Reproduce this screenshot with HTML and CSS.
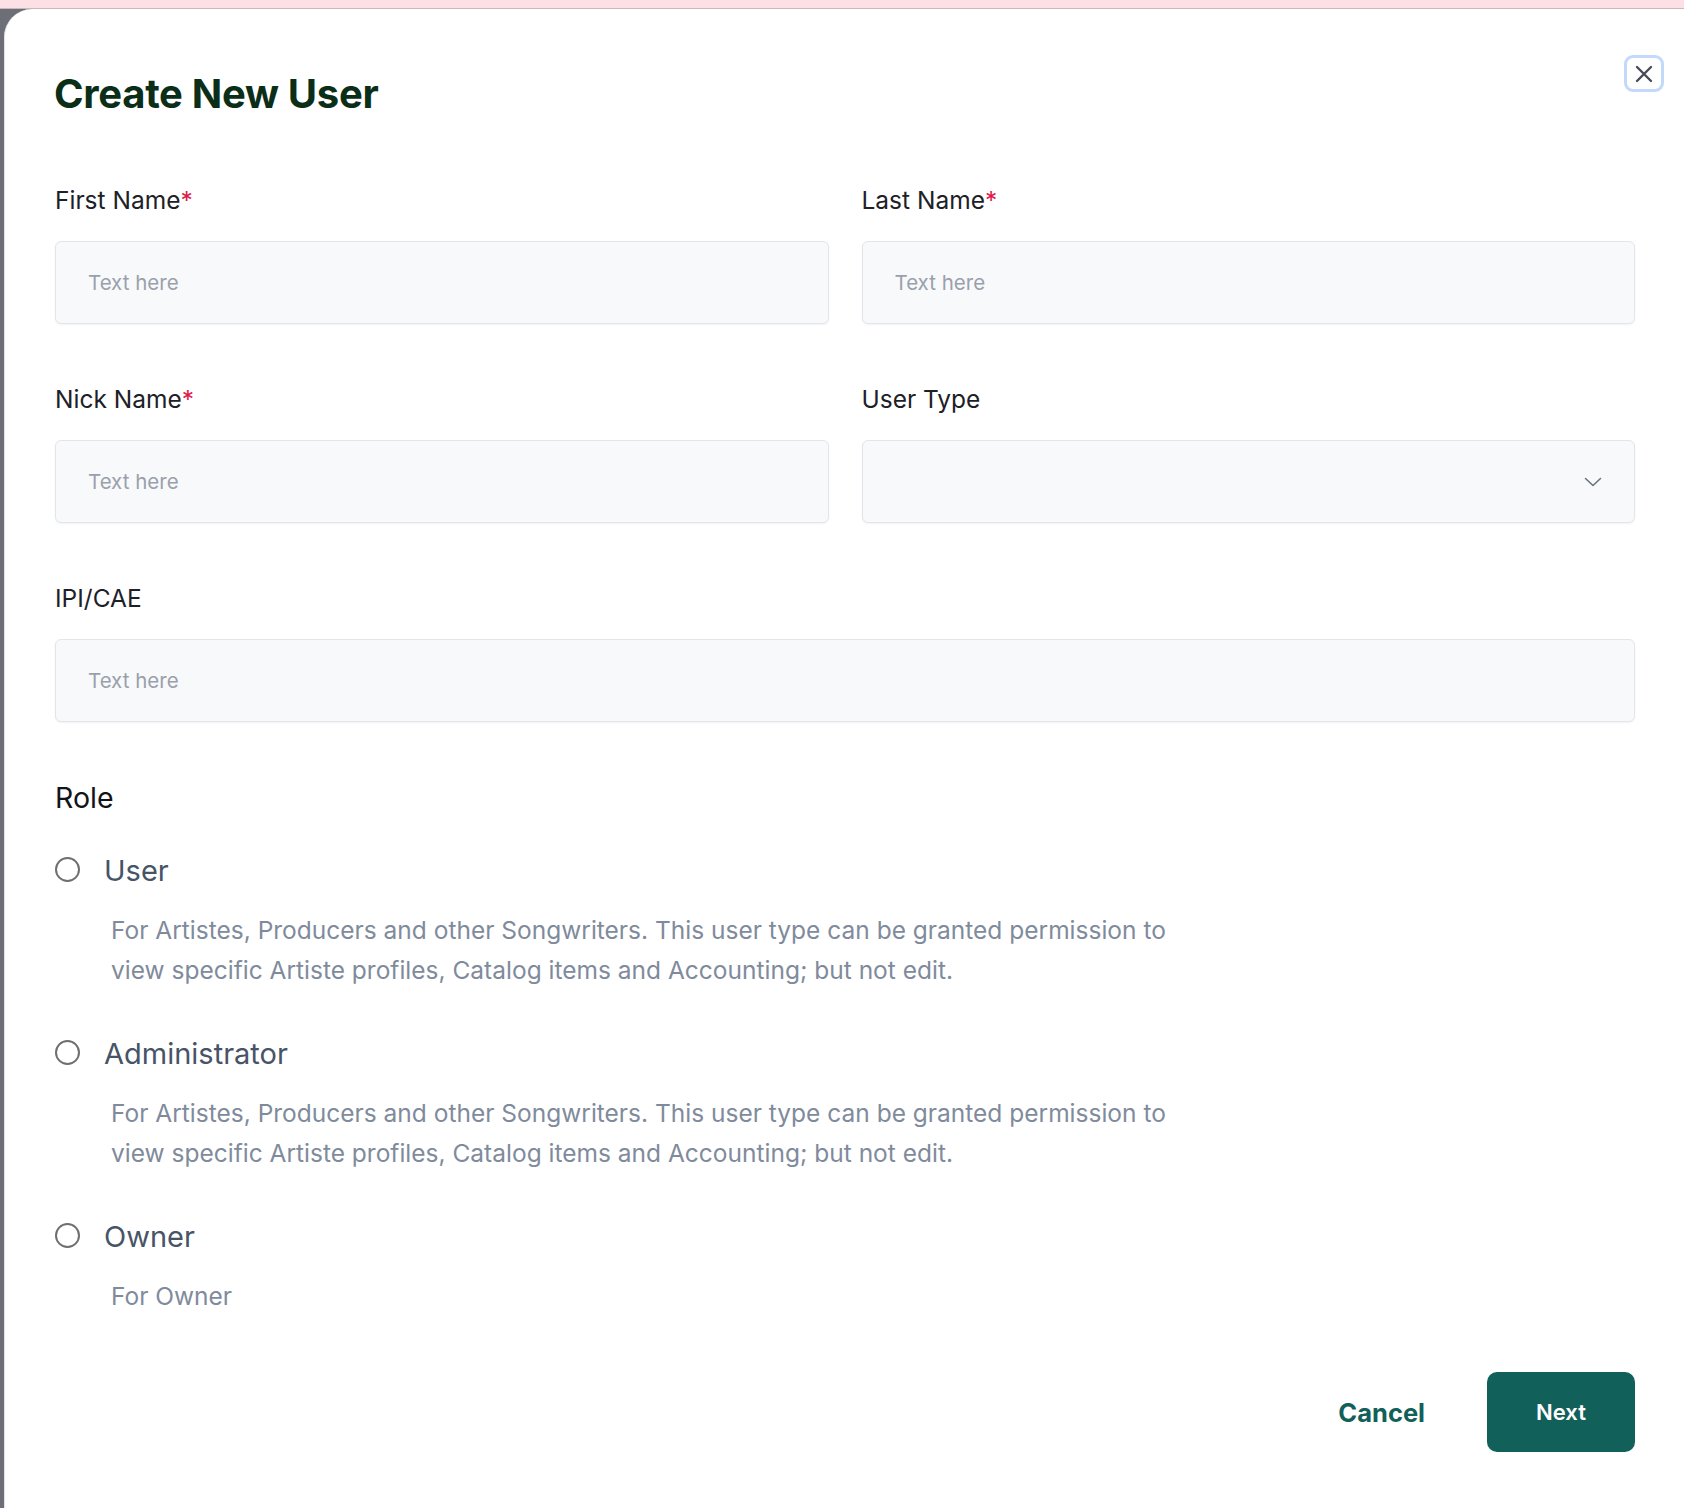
FILE: index.html
```html
<!DOCTYPE html>
<html lang="en">
<head>
<meta charset="utf-8">
<title>Create New User</title>
<link rel="stylesheet" href="styles.css">
</head>
<body>
<div class="topbar"></div>
<div class="modal">
  <button class="close" aria-label="Close">
    <svg width="20" height="20" viewBox="0 0 20 20"><path d="M3 3 L17 17 M17 3 L3 17" stroke="#474c58" stroke-width="2.4" stroke-linecap="round" fill="none"/></svg>
  </button>
  <h1 class="title">Create New User</h1>

  <div class="grid">
    <div class="field">
      <label class="label">First Name<span class="req">*</span></label>
      <div class="input"><span class="ph">Text here</span></div>
    </div>
    <div class="field">
      <label class="label">Last Name<span class="req">*</span></label>
      <div class="input"><span class="ph">Text here</span></div>
    </div>
    <div class="field">
      <label class="label">Nick Name<span class="req">*</span></label>
      <div class="input"><span class="ph">Text here</span></div>
    </div>
    <div class="field">
      <label class="label">User Type</label>
      <div class="input select">
        <svg width="18" height="10" viewBox="0 0 18 10"><path d="M1.5 1.5 L9 8.5 L16.5 1.5" stroke="#6b7280" stroke-width="1.6" fill="none" stroke-linecap="round" stroke-linejoin="round"/></svg>
      </div>
    </div>
    <div class="field wide">
      <label class="label">IPI/CAE</label>
      <div class="input"><span class="ph">Text here</span></div>
    </div>
  </div>

  <h2 class="role-title">Role</h2>
  <div class="roles">
    <div class="role">
      <div class="role-head"><span class="radio"></span><span class="role-name">User</span></div>
      <p class="role-desc">For Artistes, Producers and other Songwriters. This user type can be granted permission to<br>view specific Artiste profiles, Catalog items and Accounting; but not edit.</p>
    </div>
    <div class="role">
      <div class="role-head"><span class="radio"></span><span class="role-name">Administrator</span></div>
      <p class="role-desc">For Artistes, Producers and other Songwriters. This user type can be granted permission to<br>view specific Artiste profiles, Catalog items and Accounting; but not edit.</p>
    </div>
    <div class="role">
      <div class="role-head"><span class="radio"></span><span class="role-name">Owner</span></div>
      <p class="role-desc">For Owner</p>
    </div>
  </div>

  <div class="actions">
    <button class="btn-cancel">Cancel</button>
    <button class="btn-next">Next</button>
  </div>
</div>
</body>
</html>
```

FILE: styles.css
```css
* { box-sizing: border-box; }
html, body { margin: 0; padding: 0; }
body {
  background: #6c6f75;
  font-family: Inter, "Noto Sans", "Liberation Sans", sans-serif;
  height: 1508px;
  overflow: hidden;
}
.topbar {
  height: 9px;
  background: #fde0e5;
  border-bottom: 1px solid #c6b8bc;
}
.modal {
  position: relative;
  margin-left: 4px;
  width: 1680px;
  min-height: 1499px;
  background: #ffffff;
  border-top-left-radius: 28px;
  border-left: 1px solid #dde4ef;
  padding: 61px 49px 0 50px;
}
.close {
  position: absolute;
  top: 46px;
  right: 20px;
  width: 40px;
  height: 37px;
  border: 3px solid #c3d9fc;
  border-radius: 9px;
  background: #fff;
  display: flex;
  align-items: center;
  justify-content: center;
  padding: 0;
}
.title {
  margin: 0 0 0 -1px;
  font-size: 40px;
  line-height: 48px;
  font-weight: 700;
  color: #0a2e18;
  letter-spacing: -0.3px;
}
.grid {
  margin-top: 66px;
  display: grid;
  grid-template-columns: 1fr 1fr;
  column-gap: 33px;
  row-gap: 59px;
}
.wide { grid-column: 1 / span 2; }
.label {
  display: block;
  font-size: 24.5px;
  line-height: 32px;
  color: #1d2127;
  font-weight: 400;
}
.req { color: #e0194a; }
.input {
  margin-top: 25px;
  height: 83px;
  background: #f8f9fb;
  border: 1px solid #e2e5e9;
  border-radius: 6px;
  box-shadow: 0 1px 2px rgba(16, 24, 40, 0.05);
  display: flex;
  align-items: center;
  padding: 0 32px;
}
.ph {
  font-size: 20.5px;
  color: #9aa0ab;
}
.select { justify-content: flex-end; padding-right: 32px; }
.role-title {
  margin: 58px 0 0;
  font-size: 28.5px;
  line-height: 36px;
  font-weight: 400;
  color: #121417;
}
.roles { margin-top: 37px; display: flex; flex-direction: column; gap: 46px; }
.role-head {
  display: flex;
  align-items: center;
  height: 36px;
}
.radio {
  width: 25px;
  height: 25px;
  border: 2px solid #6f6f72;
  border-radius: 50%;
  background: #fff;
  margin-right: 24px;
  margin-top: -4px;
  flex: none;
}
.role-name {
  font-size: 29px;
  line-height: 36px;
  color: #475467;
}
.role-desc {
  margin: 21px 0 0 56px;
  font-size: 24.5px;
  line-height: 40px;
  color: #7f8b9c;
  white-space: nowrap;
}
.actions {
  margin-top: 56px;
  display: flex;
  justify-content: flex-end;
  align-items: center;
  gap: 62px;
}
.btn-cancel {
  border: none;
  background: none;
  padding: 0;
  font-family: inherit;
  font-size: 25.5px;
  font-weight: 700;
  color: #12605a;
}
.btn-next {
  width: 148px;
  height: 80px;
  border: none;
  border-radius: 10px;
  background: #12605a;
  color: #ffffff;
  font-family: inherit;
  font-size: 22px;
  font-weight: 600;
}
```
